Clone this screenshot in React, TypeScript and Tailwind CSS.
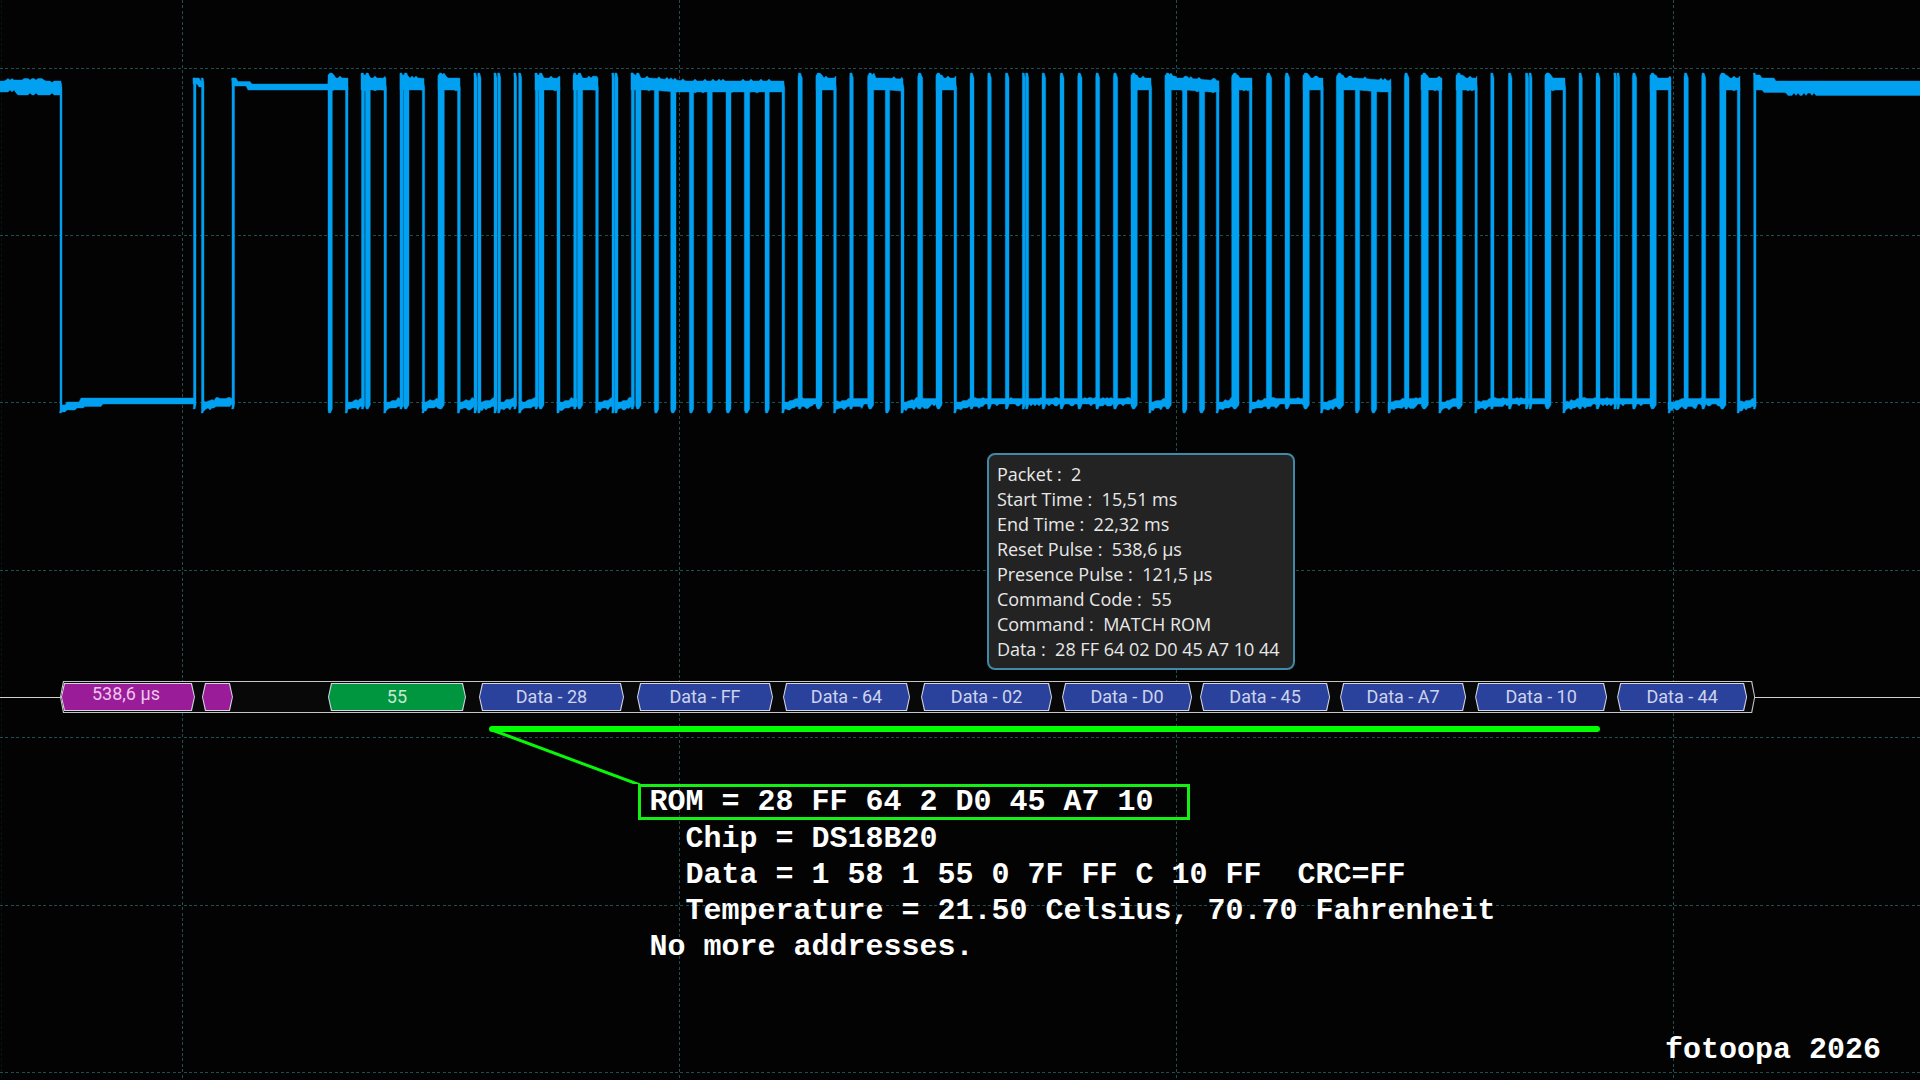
import clsx from "clsx";

type Span = [number, number];

const columns = [1, 182, 679, 1176, 1673];
const rows = [68, 235, 402, 570, 737, 905, 1072];

// spans where the bus idles high
const highs: Span[] = [
  [328, 348], [361, 386], [400, 424], [438, 460], [535, 560], [573, 598],
  [631, 784], [816, 836], [868, 903], [936, 956], [1131, 1151], [1165, 1219],
  [1232, 1252], [1303, 1323], [1337, 1391], [1421, 1442], [1456, 1477],
  [1545, 1565], [1650, 1671], [1720, 1740],
];

// spans where the bus is held low
const lows: Span[] = [
  [202, 234], [346, 364], [384, 403], [422, 441], [458, 477], [478, 496],
  [498, 516], [519, 538], [557, 577], [596, 614], [615, 634], [782, 820],
  [834, 871], [902, 940], [955, 1135], [1149, 1168], [1217, 1236],
  [1250, 1307], [1321, 1341], [1388, 1425], [1439, 1460], [1475, 1550],
  [1563, 1655], [1668, 1724], [1738, 1756],
];

const edges: Span[] = [
  [60, 62], [193.5, 196], [201.5, 204], [232, 234.5], [328, 332.3], [345.5, 348], [361.5, 364.5],
  [365.3, 370.3], [384, 386.5], [400, 403], [403.5, 409], [422.3, 424.7],
  [438, 444.3], [457.5, 460.3], [474, 477], [477.7, 481], [494, 497],
  [497.7, 500.7], [514, 516.7], [518.7, 521.7], [535.3, 538], [538.5, 544], [557, 560],
  [573.7, 576.7], [577.3, 582.7], [595.7, 598.3], [612, 614.7], [615, 618],
  [631.3, 634.3], [635.7, 641], [654.3, 658.7], [670.7, 676], [689.3, 693.7],
  [707.3, 712.3], [726, 731], [744.3, 749.7], [765, 769.3], [782, 784.7],
  [798, 802.3], [816, 822], [833.7, 836.3], [849.7, 853.3], [867.7, 873.7],
  [885.3, 889.7], [901, 904], [917.7, 922.7], [936, 942], [954, 956.7],
  [970, 974], [987.7, 991.3], [1005.3, 1009], [1022.3, 1025.3], [1025.7, 1028.7],
  [1042, 1045.7], [1060, 1064], [1077.7, 1082], [1095.7, 1099.7], [1113.3, 1117.7],
  [1131, 1137.3], [1149, 1151.7], [1165, 1171.3], [1182.5, 1187], [1199.3, 1204.7],
  [1216.3, 1219], [1231.7, 1239], [1249.3, 1252], [1266.3, 1271.7], [1285, 1289.7],
  [1303, 1309.3], [1320.7, 1323.3], [1336.3, 1343.7], [1355.3, 1359.7],
  [1371.3, 1376.7], [1388.3, 1391], [1404.3, 1409], [1421.3, 1428.3],
  [1439, 1441.7], [1456.3, 1462.3], [1475, 1477.3], [1490.7, 1494], [1508.3, 1512],
  [1525.5, 1528.7], [1529.3, 1532], [1545, 1551], [1563, 1565.7], [1579, 1582.3],
  [1596, 1600], [1614, 1616.8], [1617.2, 1619.7], [1632.3, 1636.7], [1650, 1656.3],
  [1668.3, 1671], [1684, 1688.3], [1701.7, 1705.7], [1719.7, 1726],
  [1737.3, 1740], [1753.7, 1756],
];

function noise(x: number) {
  const n = Math.sin(x * 12.9898) * 43758.5453;
  return n - Math.floor(n);
}

// ragged band between two level functions
function band([x0, x1]: Span, top: (x: number) => number, bottom: (x: number) => number) {
  const upper: string[] = [];
  const lower: string[] = [];
  for (let x = x0; x <= x1; x += 2) {
    upper.push(`${x},${top(x).toFixed(1)}`);
    lower.unshift(`${x},${bottom(x).toFixed(1)}`);
  }
  upper.push(`${x1},${top(x1).toFixed(1)}`);
  lower.unshift(`${x1},${bottom(x1).toFixed(1)}`);
  return `M${upper.join("L")}L${lower.join("L")}Z`;
}

function highBand(span: Span) {
  const sag = (x: number) => Math.min(3, Math.max(0, (x - span[0] - 20) / 12));
  return band(
    span,
    x => (x - span[0] < 8 ? 75 : 78) + sag(x) - (noise(x) > 0.75 ? 2 : 0),
    x => 90 + Math.min(2, sag(x)) + (noise(x + 5) > 0.9 ? 1 : 0),
  );
}

function lowBand(span: Span) {
  return band(
    span,
    x => (x - span[0] < 8 ? 402 : x - span[0] < 14 ? 400.5 : 398.5) - (noise(x) > 0.8 ? 1 : 0),
    x => {
      const t = x - span[0];
      const level = t < 6 ? 409 : t < 14 ? 408 : t < 30 ? 406.5 : 404;
      return level + (noise(x + 3) > 0.75 ? 2 : 0);
    },
  );
}

function edgePath([x0, x1]: Span) {
  const mid = (x0 + x1) / 2;
  const dip = highs.some(([a, b]) => mid > a + 10 && mid <= b + 1);
  const falling = lows.some(([a]) => Math.abs(mid - a) < 3) || x0 === 60;
  const top = dip || x0 === 60 ? 84 : x0 < 340 ? 79 : 74;
  const bottom = dip || falling || x0 === 328 ? 412 : 408;
  const peak = mid - 0.6;
  return `M${x0},${top + 3}L${peak - 1},${top - 1}L${peak + 1},${top - 1}L${x1},${top + 4}V${bottom - 3}L${peak + 1},${bottom + 1}H${peak - 1}L${x0},${bottom - 2}Z`;
}

const trace = [
  band([0, 61], x => (x < 5 || x > 45 ? 81 : 78.5) + (noise(x) > 0.6 ? 1.5 : 0), x => (x < 16 ? 92 : 95) - (noise(x) > 0.8 ? 2 : 0)),
  band([61, 195], x => (x < 66 ? 405 : x < 80 ? 402 : 398), x => (x < 66 ? 412 : x < 76 ? 410 : x < 84 ? 408 : x < 103 ? 406.5 : 404)),
  band([193, 203], x => (x < 200 ? 78 : 81), x => (x < 198 ? 84 : 87)),
  band([232, 330], x => (x < 238 ? 78 : x < 252 ? 81.5 : 84), x => (x < 248 ? 86 : 90)),
  band([1754, 1920], x => (x < 1762 ? 75 : x < 1776 ? 78 : 81), x => (x < 1763 ? 90 : x < 1786 ? 92.5 : x < 1822 ? (noise(x) > 0.4 ? 95.5 : 93) : 95.5)),
  ...highs.map(highBand),
  ...lows.map(lowBand),
  ...edges.map(edgePath),
].join("");

type Frame = { start: number; end: number; label?: string; kind: "pulse" | "command" | "data" };

const frames: Frame[] = [
  { start: 61, end: 195, label: "538,6 µs", kind: "pulse" },
  { start: 202, end: 233, kind: "pulse" },
  { start: 328, end: 466, label: "55", kind: "command" },
  { start: 479, end: 624, label: "Data - 28", kind: "data" },
  { start: 637, end: 773, label: "Data - FF", kind: "data" },
  { start: 783, end: 910, label: "Data - 64", kind: "data" },
  { start: 921, end: 1052, label: "Data - 02", kind: "data" },
  { start: 1062, end: 1192, label: "Data - D0", kind: "data" },
  { start: 1200, end: 1330, label: "Data - 45", kind: "data" },
  { start: 1340, end: 1466, label: "Data - A7", kind: "data" },
  { start: 1475, end: 1607, label: "Data - 10", kind: "data" },
  { start: 1617, end: 1747, label: "Data - 44", kind: "data" },
];

const packet = [
  ["Packet", "2"],
  ["Start Time", "15,51 ms"],
  ["End Time", "22,32 ms"],
  ["Reset Pulse", "538,6 µs"],
  ["Presence Pulse", "121,5 µs"],
  ["Command Code", "55"],
  ["Command", "MATCH ROM"],
  ["Data", "28 FF 64 02 D0 45 A7 10 44"],
];

const log = [
  "  Chip = DS18B20",
  "  Data = 1 58 1 55 0 7F FF C 10 FF  CRC=FF",
  "  Temperature = 21.50 Celsius, 70.70 Fahrenheit",
  "No more addresses.",
];

const hexagon =
  "[clip-path:polygon(3px_0,calc(100%-3px)_0,100%_50%,calc(100%-3px)_100%,3px_100%,0_50%)]";

function Graticule() {
  return (
    <svg className="absolute inset-0 size-full" viewBox="0 0 1920 1080" preserveAspectRatio="none" aria-hidden="true">
      <g stroke="#1b4f50" strokeWidth="1" strokeDasharray="3 2.4" shapeRendering="crispEdges">
        {columns.map(x => (
          <line key={x} x1={x + 0.5} y1="0" x2={x + 0.5} y2="1080" opacity={x === 1 ? 0.2 : 1} />
        ))}
        {rows.map(y => (
          <line key={y} x1="0" y1={y + 0.5} x2="1920" y2={y + 0.5} />
        ))}
      </g>
    </svg>
  );
}

function PacketTooltip() {
  return (
    <div
      role="tooltip"
      className="absolute left-[51.4%] top-[453px] rounded-lg border-2 border-[#3f8aa6] bg-[#232323] pt-[7px] pr-[13px] pb-[6px] pl-2 font-['Open_Sans','Noto_Sans',sans-serif] text-[18px] leading-[25px] whitespace-pre text-[#e8e8e8]"
    >
      {packet.map(([name, value]) => (
        <div key={name}>{`${name} :  ${value}`}</div>
      ))}
    </div>
  );
}

function DecodedFrame({ frame }: { frame: Frame }) {
  return (
    <div
      className={clsx("min-w-0 basis-0 bg-[#d4d4e4] py-px", hexagon)}
      style={{ flexGrow: frame.end - frame.start }}
    >
      <div
        className={clsx(
          "mx-px flex h-full justify-center whitespace-nowrap",
          hexagon,
          frame.kind === "pulse" && "items-start bg-[#9a1c98] pr-1 leading-5 text-[#edc6ec]",
          frame.kind === "command" && "items-center bg-[#00963f] text-[#c5e8d2]",
          frame.kind === "data" && "items-center bg-[#2b429c] text-[#cdd3ee]",
        )}
      >
        {frame.label}
      </div>
    </div>
  );
}

function DecodeBus() {
  return (
    <div className="flex h-8 items-center font-[Roboto,sans-serif] text-[18px] leading-[22px]">
      <div className="h-px basis-0 bg-[#d0d0d0]" style={{ flexGrow: 60 }} />
      <div className={clsx("h-full min-w-0 basis-0 bg-[#c4c4c4] p-px", hexagon)} style={{ flexGrow: 1695 }}>
        <div className={clsx("flex h-full bg-[#080808] py-px", hexagon)}>
          {frames.map((frame, i) => (
            <div key={frame.start} className="contents">
              {i > 0 && <div className="basis-0" style={{ flexGrow: frame.start - frames[i - 1].end }} />}
              <DecodedFrame frame={frame} />
            </div>
          ))}
          <div className="basis-0" style={{ flexGrow: 7 }} />
        </div>
      </div>
      <div className="h-px basis-0 bg-[#d0d0d0]" style={{ flexGrow: 165 }} />
    </div>
  );
}

export default function App() {
  return (
    <main className="relative flex min-h-screen flex-col overflow-hidden bg-[#030303] font-['Liberation_Mono',monospace] text-[30px] leading-9 font-bold text-white">
      <Graticule />

      <section className="relative z-10 font-normal">
        <svg className="block h-[681px] w-full" viewBox="0 0 1920 681" preserveAspectRatio="none" role="img" aria-label="1-Wire bus trace">
          <path d={trace} fill="#02a0f0" stroke="#02a0f0" strokeWidth="0.4" />
        </svg>
        <PacketTooltip />
      </section>

      <section className="relative font-normal">
        <DecodeBus />
        <svg className="block h-[71px] w-full" viewBox="0 0 1920 71" preserveAspectRatio="none" aria-hidden="true">
          <path d="M492 16H1597" stroke="#00ff00" strokeWidth="6" strokeLinecap="round" />
          <path d="M492 17L640 72" stroke="#0af50a" strokeWidth="3" />
        </svg>
      </section>

      <section className="relative pl-[33.25%] whitespace-pre">
        <p className="flex h-9 w-[552px] items-center border-3 border-[#14f014] pl-2">
          ROM = 28 FF 64 2 D0 45 A7 10
        </p>
        <div className="pt-px pl-[11px]">
          {log.map(line => (
            <p key={line}>{line}</p>
          ))}
        </div>
      </section>

      <footer className="relative mt-auto pr-[39px] pb-3 text-right">fotoopa 2026</footer>
    </main>
  );
}
